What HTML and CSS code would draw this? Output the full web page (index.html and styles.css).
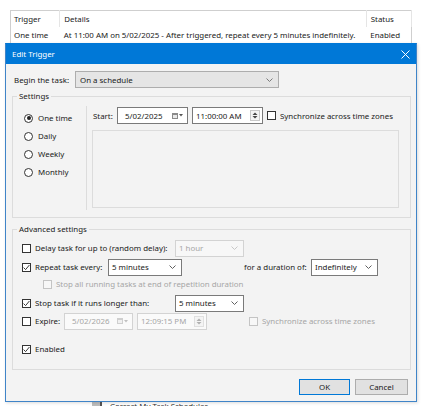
FILE: index.html
```html
<!DOCTYPE html>
<html>
<head>
<meta charset="utf-8">
<title>Edit Trigger</title>
<link rel="stylesheet" href="styles.css">
</head>
<body>
<div class="bg">
  <table class="triggers">
    <thead>
      <tr><th class="c1">Trigger</th><th class="c2">Details</th><th class="c3">Status</th></tr>
    </thead>
    <tbody>
      <tr><td>One time</td><td>At 11:00 AM on 5/02/2025 - After triggered, repeat every 5 minutes indefinitely.</td><td>Enabled</td></tr>
    </tbody>
  </table>
  <div class="bg-below"><span class="bg-box"></span><span class="bg-text">Correct My Task Scheduler</span></div>
</div>

<div class="dialog">
  <div class="titlebar">
    <span class="title">Edit Trigger</span>
    <svg class="close" width="9" height="9" viewBox="0 0 9 9"><path d="M0.5 0.5 L8.5 8.5 M8.5 0.5 L0.5 8.5" stroke="#fff" stroke-width="1" fill="none"/></svg>
  </div>
  <div class="dlg-body">
    <div class="begin-row">
      <span class="begin-label">Begin the task:</span>
      <div class="combo combo-list w204"><span>On a schedule</span><svg class="chev" width="7" height="4" viewBox="0 0 7 4"><path d="M0.5 0.5 L3.5 3.5 L6.5 0.5" stroke="#7a7a7a" fill="none"/></svg></div>
    </div>

    <fieldset class="group settings">
      <legend>Settings</legend>
      <div class="settings-inner">
        <div class="radios">
          <div class="radio-row"><span class="radio on"></span><span>One time</span></div>
          <div class="radio-row"><span class="radio"></span><span>Daily</span></div>
          <div class="radio-row"><span class="radio"></span><span>Weekly</span></div>
          <div class="radio-row"><span class="radio"></span><span>Monthly</span></div>
        </div>
        <div class="sched">
          <div class="start-row">
            <span class="start-label">Start:</span>
            <div class="dtp w71"><span>5/02/2025</span><span class="cal"><span class="cal-box"></span><svg width="4" height="3" viewBox="0 0 4 3"><path d="M0 0 H4 L2 2.5 Z" fill="#555"/></svg></span></div>
            <div class="dtp w71"><span>11:00:00 AM</span><span class="spin"><svg width="6" height="3" viewBox="0 0 6 3"><path d="M0.5 3 L3 0.5 L5.5 3 Z" fill="#444"/></svg><svg width="6" height="3" viewBox="0 0 6 3"><path d="M0.5 0 L3 2.5 L5.5 0 Z" fill="#444"/></svg></span></div>
            <span class="check"></span>
            <span class="start-sync">Synchronize across time zones</span>
          </div>
          <div class="panel"></div>
        </div>
      </div>
    </fieldset>

    <fieldset class="group advanced">
      <legend>Advanced settings</legend>
      <div class="adv-row r1">
        <div class="cl w153"><span class="check"></span><span>Delay task for up to (random delay):</span></div>
        <div class="combo combo-dis w69"><span>1 hour</span><svg class="chev" width="7" height="4" viewBox="0 0 7 4"><path d="M0.5 0.5 L3.5 3.5 L6.5 0.5" stroke="#c8c8c8" fill="none"/></svg></div>
      </div>
      <div class="adv-row r2">
        <div class="cl w86"><span class="check on"><svg width="7" height="7" viewBox="0 0 7 7"><path d="M0.6 3.6 L2.6 5.6 L6.4 1" stroke="#222" stroke-width="0.9" fill="none"/></svg></span><span>Repeat task every:</span></div>
        <div class="combo combo-en w74"><span>5 minutes</span><svg class="chev" width="7" height="4" viewBox="0 0 7 4"><path d="M0.5 0.5 L3.5 3.5 L6.5 0.5" stroke="#606060" fill="none"/></svg></div>
        <span class="dur-label">for a duration of:</span>
        <div class="combo combo-en w67"><span>Indefinitely</span><svg class="chev" width="7" height="4" viewBox="0 0 7 4"><path d="M0.5 0.5 L3.5 3.5 L6.5 0.5" stroke="#606060" fill="none"/></svg></div>
      </div>
      <div class="adv-row r3">
        <div class="cl dis"><span class="check dis"></span><span>Stop all running tasks at end of repetition duration</span></div>
      </div>
      <div class="adv-row r4">
        <div class="cl w153"><span class="check on"><svg width="7" height="7" viewBox="0 0 7 7"><path d="M0.6 3.6 L2.6 5.6 L6.4 1" stroke="#222" stroke-width="0.9" fill="none"/></svg></span><span>Stop task if it runs longer than:</span></div>
        <div class="combo combo-en w69"><span>5 minutes</span><svg class="chev" width="7" height="4" viewBox="0 0 7 4"><path d="M0.5 0.5 L3.5 3.5 L6.5 0.5" stroke="#606060" fill="none"/></svg></div>
      </div>
      <div class="adv-row r5">
        <div class="cl w42"><span class="check"></span><span>Expire:</span></div>
        <div class="dtp dtp-dis w69"><span>5/02/2026</span><span class="cal"><span class="cal-box"></span><svg width="4" height="3" viewBox="0 0 4 3"><path d="M0 0 H4 L2 2.5 Z" fill="#c0c0c0"/></svg></span></div>
        <div class="dtp dtp-dis w70"><span>12:09:15 PM</span><span class="spin"><svg width="6" height="3" viewBox="0 0 6 3"><path d="M0.5 3 L3 0.5 L5.5 3 Z" fill="#b0b0b0"/></svg><svg width="6" height="3" viewBox="0 0 6 3"><path d="M0.5 0 L3 2.5 L5.5 0 Z" fill="#b0b0b0"/></svg></span></div>
        <div class="cl dis sync2"><span class="check dis"></span><span>Synchronize across time zones</span></div>
      </div>
      <div class="adv-row r6">
        <div class="cl"><span class="check on"><svg width="7" height="7" viewBox="0 0 7 7"><path d="M0.6 3.6 L2.6 5.6 L6.4 1" stroke="#222" stroke-width="0.9" fill="none"/></svg></span><span>Enabled</span></div>
      </div>
    </fieldset>

    <div class="buttons">
      <button class="btn btn-default">OK</button>
      <button class="btn btn-cancel">Cancel</button>
    </div>
  </div>
</div>
</body>
</html>
```

FILE: styles.css
```css
html, body {
  margin: 0;
  padding: 0;
}
body {
  width: 423px;
  height: 406px;
  overflow: hidden;
  background: #ffffff;
  font-family: "Noto Sans", "Open Sans", sans-serif;
  font-size: 7.9px;
  color: #1a1a1a;
  position: relative;
}

/* background list */
.bg {
  padding: 10px 0 0 10px;
}
.triggers {
  border-collapse: collapse;
  width: 402px;
  border: 1px solid #cfcfcf;
  table-layout: fixed;
}
.triggers th, .triggers td {
  text-align: left;
  font-weight: normal;
  padding: 0 0 0 4px;
  white-space: nowrap;
  overflow: hidden;
}
.triggers th {
  height: 16px;
  border-right: 1px solid #e5e5e5;
}
.triggers th:first-child, .triggers td:first-child {
  padding-left: 3px;
}
.triggers td {
  height: 16px;
}
.c1 { width: 45px; }
.c2 { width: 300px; }
.c3 { width: 40px; }
.bg-below {
  margin-top: 358px;
  display: flex;
  align-items: flex-start;
  padding-left: 82px;
  height: 10px;
  color: #333;
}
.bg-box {
  width: 8px;
  height: 8px;
  background: #bdbdbd;
  border-right: 2px solid #555;
}
.bg-text {
  margin-left: 8px;
  line-height: 9px;
}

/* dialog window */
.dialog {
  position: absolute;
  left: 5px;
  top: 43px;
  width: 410px;
  height: 357px;
  border: 1px solid #3f84c8;
  border-top-color: #0078d7;
  background: #f3f3f3;
  box-shadow: 1px 1px 3px rgba(0,0,0,0.15);
}
.titlebar {
  height: 20px;
  background: #0078d7;
  color: #fff;
  display: flex;
  align-items: center;
  justify-content: space-between;
  padding: 0 6px 0 6px;
}
.dlg-body {
  display: flex;
  flex-direction: column;
}

.begin-row {
  display: flex;
  align-items: center;
  margin-top: 7px;
  height: 17px;
  padding-left: 8px;
}
.begin-label {
  width: 61px;
}

/* combos */
.combo {
  box-sizing: border-box;
  height: 17px;
  display: flex;
  align-items: center;
  justify-content: space-between;
  padding: 0 5px 0 4px;
}
.combo-list {
  border: 1px solid #adadad;
  background: #e5e5e5;
}
.combo-en {
  border: 1px solid #7a7a7a;
  background: #fff;
  padding-left: 3px;
}
.combo-dis {
  border: 1px solid #d3d3d3;
  background: #f7f7f7;
  color: #a6a6a6;
  padding-left: 3px;
}
.chev { flex: none; }
.w204 { width: 204px; }
.w74 { width: 74px; }
.w71 { width: 71px; }
.w70 { width: 70px; }
.w69 { width: 69px; }
.w67 { width: 67px; }

/* group boxes */
.group {
  margin: 0 0 0 6px;
  width: 399px;
  box-sizing: border-box;
  border: 1px solid #dcdcdc;
  padding: 0;
  min-width: 0;
}
.group legend {
  padding: 0 2px;
  margin-left: 4px;
  line-height: 12px;
}
.settings {
  margin-top: 2px;
}
.advanced {
  margin-top: 5px;
}

.settings-inner {
  display: flex;
  height: 115px;
}
.radios {
  box-sizing: border-box;
  width: 74px;
  border-right: 1px solid #dcdcdc;
  margin: 4px 0 7px 0;
  padding: 3px 0 0 11px;
}
.radio-row {
  display: flex;
  align-items: center;
  height: 18px;
  gap: 5px;
}
.radio {
  box-sizing: border-box;
  width: 9px;
  height: 9px;
  border: 1px solid #333;
  border-radius: 50%;
  background: #fff;
  display: flex;
  align-items: center;
  justify-content: center;
}
.radio.on::after {
  content: "";
  width: 4px;
  height: 4px;
  border-radius: 50%;
  background: #222;
}

.sched {
  flex: 1;
  display: flex;
  flex-direction: column;
  padding-left: 6px;
}
.start-row {
  display: flex;
  align-items: center;
  height: 17px;
  margin-top: 5px;
}
.start-label {
  width: 24px;
}
.start-row .dtp + .dtp {
  margin-left: 4px;
}
.start-row .check {
  margin-left: 4px;
}
.start-sync {
  margin-left: 4px;
}
.panel {
  margin: 6px 0 0 -1px;
  width: 307px;
  height: 78px;
  box-sizing: border-box;
  border: 1px solid #dcdcdc;
}

/* date/time pickers */
.dtp {
  box-sizing: border-box;
  height: 17px;
  border: 1px solid #7a7a7a;
  background: #fff;
  display: flex;
  align-items: center;
  justify-content: space-between;
  padding: 0 4px 0 7px;
}
.dtp-dis {
  border-color: #d3d3d3;
  background: #fafafa;
  color: #a6a6a6;
}
.dtp + .dtp {
  padding-left: 3px;
}
.cal {
  display: flex;
  align-items: center;
  gap: 1px;
}
.cal-box {
  width: 6px;
  height: 6px;
  box-sizing: border-box;
  border: 1px solid #8a8a8a;
  border-top-width: 2px;
  background: #e8e8e8;
}
.dtp-dis .cal-box {
  border-color: #cfcfcf;
  background: #f0f0f0;
}
.spin {
  display: flex;
  flex-direction: column;
  gap: 1px;
  border: 1px solid #c8c8c8;
  padding: 1px 1px;
  background: #f4f4f4;
  margin-right: -2px;
}
.dtp-dis .spin {
  border-color: #e0e0e0;
}

/* checkboxes */
.check {
  flex: none;
  box-sizing: border-box;
  width: 9px;
  height: 9px;
  border: 1px solid #333;
  background: #fff;
  display: flex;
  align-items: center;
  justify-content: center;
}
.check.dis {
  border-color: #c4c4c4;
  background: #f7f7f7;
}

/* advanced rows */
.adv-row {
  display: flex;
  align-items: center;
  height: 18px;
  padding-left: 9px;
}
.r1 { margin-top: 4px; }
.r2 { margin-top: 1px; }
.r3 { height: 16px; padding-left: 30px; }
.r4 { margin-top: 2px; }
.r6 { margin-top: 10px; margin-bottom: 11px; }
.cl {
  display: flex;
  align-items: center;
  gap: 4px;
  flex: none;
}
.cl.dis {
  color: #a6a6a6;
}
.w153 { width: 153px; }
.w86 { width: 86px; }
.w42 { width: 42px; }
.dur-label {
  margin-left: 62px;
  width: 67px;
}
.r5 .dtp + .dtp {
  margin-left: 4px;
}
.sync2 {
  margin-left: 42px;
}

/* buttons */
.buttons {
  display: flex;
  justify-content: flex-end;
  gap: 5px;
  margin: 9px 8px 0 0;
}
.btn {
  font-family: inherit;
  font-size: inherit;
  color: #1a1a1a;
  height: 16px;
  padding: 0;
  background: #e1e1e1;
  border: 1px solid #adadad;
  box-sizing: border-box;
}
.btn-default {
  width: 51px;
  border-color: #0078d7;
}
.btn-cancel {
  width: 53px;
}
```
